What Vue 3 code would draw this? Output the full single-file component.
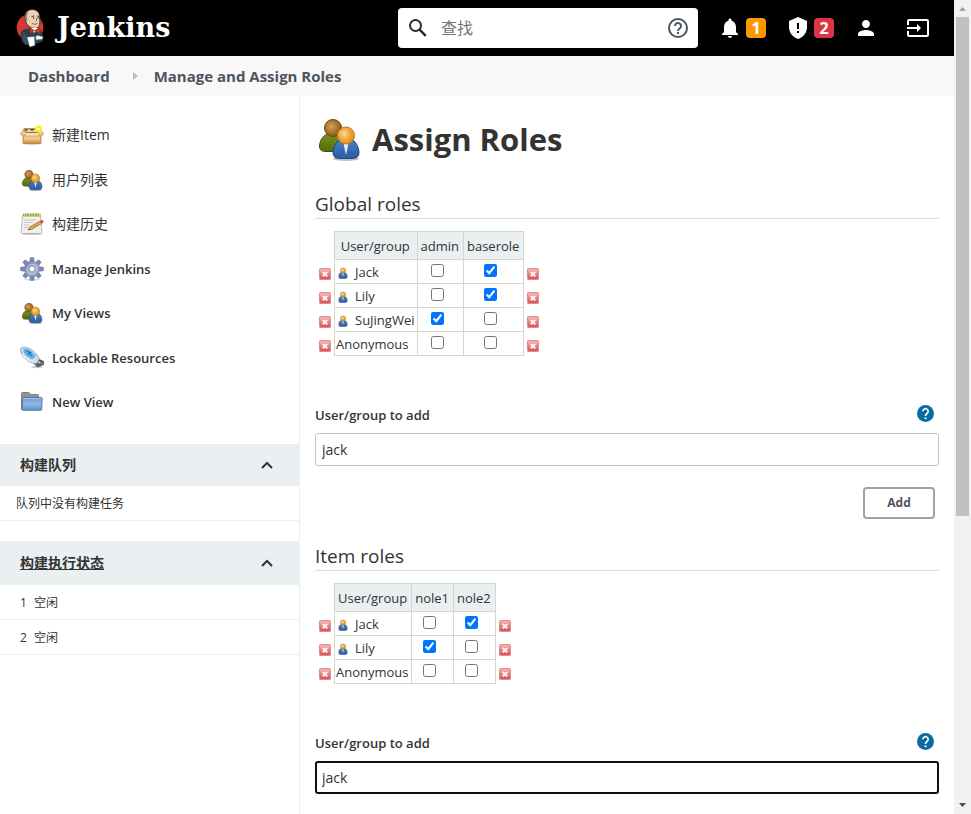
<script setup>
import { ref, reactive } from 'vue'

const tasks = [
  { label: '新建Item', icon: 'package' },
  { label: '用户列表', icon: 'people' },
  { label: '构建历史', icon: 'notepad' },
  { label: 'Manage Jenkins', icon: 'gear', latin: true },
  { label: 'My Views', icon: 'people', latin: true },
  { label: 'Lockable Resources', icon: 'usb', latin: true },
  { label: 'New View', icon: 'folder', latin: true }
]

const executors = [
  { id: 1, status: '空闲' },
  { id: 2, status: '空闲' }
]

const sections = reactive([
  {
    id: 'global',
    title: 'Global roles',
    roles: ['admin', 'baserole'],
    rows: [
      { name: 'Jack', known: true, granted: [false, true] },
      { name: 'Lily', known: true, granted: [false, true] },
      { name: 'SuJingWei', known: true, granted: [true, false] },
      { name: 'Anonymous', known: false, granted: [false, false] }
    ],
    entry: 'jack',
    active: false,
    showAdd: true
  },
  {
    id: 'item',
    title: 'Item roles',
    roles: ['nole1', 'nole2'],
    rows: [
      { name: 'Jack', known: true, granted: [false, true] },
      { name: 'Lily', known: true, granted: [true, false] },
      { name: 'Anonymous', known: false, granted: [false, false] }
    ],
    entry: 'jack',
    active: true,
    showAdd: false
  }
])

const query = ref('')

function addRow(section) {
  const name = section.entry.trim()
  if (name) section.rows.push({ name, known: true, granted: section.roles.map(() => false) })
}

function removeRow(section, index) {
  section.rows.splice(index, 1)
}
</script>

<template>
  <svg class="sprite" aria-hidden="true">
    <defs>
      <radialGradient id="gold" cx=".4" cy=".4" r=".65">
        <stop offset="0" stop-color="#fbdc9c" /><stop offset=".5" stop-color="#efab3c" /><stop offset="1" stop-color="#d68c1c" />
      </radialGradient>
      <radialGradient id="bronze" cx=".4" cy=".4" r=".65">
        <stop offset="0" stop-color="#d3a45e" /><stop offset=".5" stop-color="#ab7830" /><stop offset="1" stop-color="#855618" />
      </radialGradient>
      <linearGradient id="blue" x1="0" y1="0" x2="0" y2="1">
        <stop offset="0" stop-color="#4a7fc2" /><stop offset="1" stop-color="#2a5ba3" />
      </linearGradient>
      <linearGradient id="green" x1="0" y1="0" x2="0" y2="1">
        <stop offset="0" stop-color="#7c8f1c" /><stop offset="1" stop-color="#526c0c" />
      </linearGradient>
      <linearGradient id="carton" x1="0" y1="0" x2="0" y2="1">
        <stop offset="0" stop-color="#d69a4c" /><stop offset=".5" stop-color="#f2cd92" /><stop offset="1" stop-color="#c98c40" />
      </linearGradient>
      <linearGradient id="steel" x1="0" y1="0" x2="1" y2="1">
        <stop offset="0" stop-color="#6678a0" /><stop offset=".5" stop-color="#a7b1d2" /><stop offset="1" stop-color="#9a9fc6" />
      </linearGradient>
      <linearGradient id="sky" x1="0" y1="0" x2="0" y2="1">
        <stop offset="0" stop-color="#6f9fd4" /><stop offset=".5" stop-color="#8db6e2" /><stop offset="1" stop-color="#5f92cc" />
      </linearGradient>
      <linearGradient id="danger" x1="0" y1="0" x2="0" y2="1">
        <stop offset="0" stop-color="#f2bcbc" /><stop offset="1" stop-color="#dc4a4e" />
      </linearGradient>
    </defs>

    <symbol id="people" viewBox="0 0 48 48">
      <ellipse cx="31" cy="43.500" rx="13" ry="2.500" fill="#000" opacity=".25" />
      <path d="M4.500 31C5 24 9 20 13 19h10c4 1 8 5 8.500 12 .2 4-3 5.500-7 5.500H11c-4 0-6.700-1.500-6.500-5.500z" fill="url(#green)" stroke="#3e5206" />
      <circle cx="18" cy="13" r="8.500" fill="url(#bronze)" stroke="#6b430d" />
      <path d="M18 37.500c.5-7 4-12 8-13h10c4 1 7.500 6 8 13 .2 4-3 6-7 6H25c-4 0-7.200-2-7-6z" fill="url(#blue)" stroke="#1d4685" />
      <path d="M28 26l3 14 3-14z" fill="#e8eff8" />
      <circle cx="31" cy="20.500" r="8.500" fill="url(#gold)" stroke="#c27d18" />
    </symbol>

    <symbol id="person" viewBox="0 0 12 12">
      <path d="M1.800 9.500C1.800 7 3 5.500 4.500 5.500h3C9 5.500 10.200 7 10.200 9.500c0 1.500-1 2-2 2H3.800c-1 0-2-.5-2-2z" fill="url(#blue)" stroke="#1d4685" stroke-width=".5" />
      <path d="M5.200 6.500l.8 3.500.8-3.500z" fill="#dce8f6" />
      <circle cx="6" cy="3.500" r="2.600" fill="url(#gold)" stroke="#b97b20" stroke-width=".5" />
    </symbol>

    <symbol id="package" viewBox="0 0 24 24">
      <ellipse cx="12" cy="20.500" rx="10" ry="1.500" fill="#000" opacity=".18" />
      <path d="M4 5.500h15l3 4.500H1.500z" fill="#b5813f" stroke="#a8702c" stroke-width=".6" />
      <path d="M6 6h11l1 3.500H5z" fill="#6b5233" />
      <path d="M6 8l3-2 3 2 3-2 2 3H6z" fill="#d8d5ce" />
      <path d="M3 10h18v9.500q0 1-1 1H4q-1 0-1-1z" fill="url(#carton)" stroke="#b67c34" stroke-width=".8" />
      <path d="M.8 10l3-3.500L6 9.800l-1.500 3.400L.8 12zM23.200 10l-3-3.500L18 9.800l1.500 3.400 3.700-1.200z" fill="#eec68a" stroke="#bd8641" stroke-width=".5" />
      <path d="M5 10h14l-1 2.500H6z" fill="#f8dfb5" />
      <circle cx="18.500" cy="6" r="3.600" fill="#f8ef27" />
      <circle cx="18.500" cy="6" r="1.600" fill="#fffcc0" />
    </symbol>

    <symbol id="notepad" viewBox="0 0 24 24">
      <ellipse cx="12" cy="22" rx="10" ry="1.200" fill="#000" opacity=".2" />
      <path d="M2.500 3.500h18L22 20.500q0 1-1 1H2q-1 0-1-1z" fill="#f1f1ef" stroke="#a9aba6" stroke-width=".8" />
      <path d="M3 1.500h17.500v3H3z" fill="#a3a238" />
      <path d="M4.500 1v3M7 1v3M9.500 1v3M12 1v3M14.500 1v3M17 1v3M19.500 1v3" stroke="#e1dfa5" stroke-width=".8" />
      <path d="M4 8h12M4 10.500h9M4 13h5M4 15.500h4" stroke="#b9bcb8" stroke-width=".8" />
      <path d="M8 18l2-3.200L20 9l1.700 2.600-10.200 5.900z" fill="#d6a04d" stroke="#8d622b" stroke-width=".6" />
      <path d="M20 9l2-1q1.800 0 1.500 2.200l-1.800 1.400z" fill="#dd4138" />
      <path d="M8 18l.8-1.300 1 1z" fill="#333" />
    </symbol>

    <symbol id="gear" viewBox="0 0 24 24">
      <ellipse cx="12" cy="22.500" rx="8" ry="1.200" fill="#000" opacity=".15" />
      <g fill="#7c8ab2" stroke="#66739a" stroke-width=".5">
        <path v-for="angle in [0, 45, 90, 135, 180, 225, 270, 315]" :key="angle" :transform="`rotate(${angle} 12 12)`" d="M9.500 6L10.300.6h3.400L14.500 6z" />
      </g>
      <circle cx="12" cy="12" r="7.500" fill="url(#steel)" stroke="#717ea5" stroke-width=".5" />
      <circle cx="12" cy="12" r="4.600" fill="none" stroke="#c3cbe2" stroke-width="1" />
      <circle cx="12" cy="12" r="3" fill="#fff" stroke="#7581a6" stroke-width=".8" />
    </symbol>

    <symbol id="usb" viewBox="0 0 24 24">
      <ellipse cx="17" cy="21" rx="6" ry="1.200" fill="#000" opacity=".2" />
      <path d="M14 17.500l5.500-4 4.300 2v3L17.500 21z" fill="#5e5f61" stroke="#3e3e40" stroke-width=".6" />
      <path d="M18 16.500l1.500-.9 1 .8-1.500 1zM20.600 17.500l1.200-.8.7.600-1.200.8z" fill="#e5e5e5" />
      <path d="M.5 4Q.5 1 4.500 1.200q4 .3 8.500 3.300l5.500 6q1.300 2.500-.3 5-1.700 2.700-4.200 2.200Q7 15.500 3 10.500.5 6.500.5 4z" fill="#d6dbe3" stroke="#8d96a4" stroke-width=".8" />
      <path d="M3.500 3q4-.8 7.500 2.200l5 4.500-4 3.600Q5.500 10 3.500 6z" fill="#4fb5ee" />
      <path d="M6.500 4.500l5 5M8 8.500l3.500-2.500M9 5v2l3 3" stroke="#155e9c" stroke-width=".9" fill="none" />
      <path d="M2.500 8.500q5 6.500 11 7.500" stroke="#fff" stroke-width="1.200" fill="none" />
    </symbol>

    <symbol id="folder" viewBox="0 0 24 24">
      <path d="M1.500 19.500V3.500q0-1 1-1h6q1 0 1.200 1l.3 1h7.500q1 0 1 1v14z" fill="#92948f" stroke="#70726e" stroke-width=".8" />
      <path d="M3.500 7.500h18q.8 0 .7 1l-.5 11q0 .8-1 .8H3q-.9 0-.8-.8l.5-11.200q0-.8.8-.8z" fill="url(#sky)" stroke="#3d6ca7" stroke-width=".8" />
      <path d="M3.500 8.500h18" stroke="#b4d0ee" stroke-width=".8" />
    </symbol>

    <symbol id="remove" viewBox="0 0 12 12">
      <rect x=".5" y=".5" width="11" height="11" rx=".8" fill="url(#danger)" stroke="#e38a8c" />
      <path d="M3.800 4l4.400 4.400M8.200 4L3.800 8.400" stroke="#fff" stroke-width="1.800" />
    </symbol>
  </svg>

  <div class="window">
    <div class="page">
      <header class="topbar">
        <a class="brand" href="#">
          <svg class="butler" viewBox="0 0 30 40" aria-hidden="true">
            <circle cx="14" cy="19.500" r="13.300" fill="#d33833" />
            <path d="M5 25q1-4 7-4.500l8 .5q6 1 6.500 5l.5 7-7 3-11 1Q4 31 5 25z" fill="#2c4254" />
            <path d="M8 23l-3 3q0 7 4 10.500l4 .5-1-10z" fill="#335061" stroke="#16222c" stroke-width=".6" />
            <path d="M9.500 6Q11 1.500 16.500 1.500q6 .5 7 5.500l.4 7q.1 6-4.900 6.500-4 .5-8-4L9.500 13q-1.500-3 0-7z" fill="#efd0ae" stroke="#2a211c" stroke-width=".8" />
            <path d="M9.200 6.500q1-3 3-3.500l-1.500 5 .8 5-2-1z" fill="#7d7469" />
            <path d="M15.500 8.500l3-.5M21 8l2.300.5" stroke="#40352e" stroke-width=".9" />
            <circle cx="17.500" cy="10" r=".7" fill="#211a16" /><circle cx="22" cy="10" r=".7" fill="#211a16" />
            <path d="M20 10q1.500 3 0 3.300M16 15.500q3 1.700 5.500 0" fill="none" stroke="#6b4a37" stroke-width=".8" />
            <path d="M15 20l3 5 4-5z" fill="#fff" />
            <path d="M14 20l4.500 2.500L14 26zM24 20l-5.500 2.500L24 26z" fill="#d33833" stroke="#7a1a17" stroke-width=".5" />
            <path d="M11 29l7.500-.5.5 9-5.500 1.500z" fill="#fff" stroke="#46545e" stroke-width=".5" />
            <path d="M19.500 28.500q2.500-2 4.500-.5l3 .5q.5 2.500-2 3l-5 .5z" fill="#fff" stroke="#46545e" stroke-width=".6" />
          </svg>
          <span>Jenkins</span>
        </a>
        <form class="search" role="search" @submit.prevent>
          <svg viewBox="0 0 24 24" aria-hidden="true"><circle cx="9.500" cy="9.500" r="5.500" fill="none" stroke="#2c2c2c" stroke-width="2" /><path d="M13.600 13.600l6.200 6.200" stroke="#2c2c2c" stroke-width="2.400" /></svg>
          <input v-model="query" type="search" placeholder="查找" aria-label="查找" />
          <a href="#" aria-label="Help">
            <svg viewBox="0 0 24 24" aria-hidden="true"><circle cx="12" cy="12" r="9" fill="none" stroke="#4d545d" stroke-width="2" /><path d="M9 10a3 3 0 1 1 4.600 2.500C12.400 13.300 12 13.900 12 15" fill="none" stroke="#4d545d" stroke-width="2" /><path d="M11 16h2v2h-2z" fill="#4d545d" /></svg>
          </a>
        </form>
        <nav class="actions" aria-label="Account">
          <a href="#" aria-label="Notifications">
            <svg viewBox="0 0 24 24" aria-hidden="true"><path fill="#fff" d="M12 22c1.100 0 2-.9 2-2h-4c0 1.100.9 2 2 2zm6-6v-5c0-3.070-1.640-5.640-4.500-6.320V4c0-.83-.67-1.500-1.500-1.500s-1.500.67-1.500 1.500v.68C7.630 5.360 6 7.920 6 11v5l-2 2v1h16v-1l-2-2z" /></svg>
            <span class="count warn">1</span>
          </a>
          <a href="#" aria-label="Security warnings">
            <svg viewBox="0 0 24 24" aria-hidden="true"><path fill="#fff" d="M12 1L3 5v6c0 5.550 3.840 10.740 9 12 5.160-1.260 9-6.450 9-12V5z" /><path fill="#000" d="M11 7h2v6h-2zM11 15h2v2h-2z" /></svg>
            <span class="count alert">2</span>
          </a>
          <a href="#" aria-label="User">
            <svg viewBox="0 0 24 24" aria-hidden="true"><path fill="#fff" d="M12 12c2.210 0 4-1.790 4-4s-1.790-4-4-4-4 1.790-4 4 1.790 4 4 4zm0 2c-2.670 0-8 1.340-8 4v2h16v-2c0-2.660-5.330-4-8-4z" /></svg>
          </a>
          <a class="logout" href="#" aria-label="Log out">
            <svg viewBox="0 0 24 24" aria-hidden="true"><path d="M2 9V5q0-1 1-1h18q1 0 1 1v14q0 1-1 1H3q-1 0-1-1v-4" fill="none" stroke="#fff" stroke-width="2" /><path d="M1 11h10V8l4 4-4 4v-3H1z" fill="#fff" /></svg>
          </a>
        </nav>
      </header>

      <nav class="crumbs" aria-label="Breadcrumb">
        <a href="#">Dashboard</a>
        <svg viewBox="0 0 5 8" aria-hidden="true"><path d="M0 0l5 4-5 4z" fill="#b9bcbf" /></svg>
        <a href="#">Manage and Assign Roles</a>
      </nav>

      <div class="body">
        <aside class="side">
          <ul class="tasks">
            <li v-for="task in tasks" :key="task.label" :class="{ latin: task.latin }">
              <a href="#"><svg aria-hidden="true"><use :href="`#${task.icon}`" /></svg>{{ task.label }}</a>
            </li>
          </ul>

          <section class="pane">
            <h2>构建队列
              <button type="button" aria-label="Collapse build queue"><svg viewBox="0 0 12 8" aria-hidden="true"><path d="M1 7l5-5 5 5" /></svg></button>
            </h2>
            <p class="row empty">队列中没有构建任务</p>
          </section>

          <section class="pane executors">
            <h2><a href="#">构建执行状态</a>
              <button type="button" aria-label="Collapse executors"><svg viewBox="0 0 12 8" aria-hidden="true"><path d="M1 7l5-5 5 5" /></svg></button>
            </h2>
            <p v-for="item in executors" :key="item.id" class="row"><span>{{ item.id }}</span>{{ item.status }}</p>
          </section>
        </aside>

        <main class="main">
          <h1><svg aria-hidden="true"><use href="#people" /></svg>Assign Roles</h1>

          <section v-for="section in sections" :key="section.id" class="roles">
            <h2>{{ section.title }}</h2>
            <table>
              <thead>
                <tr>
                  <td class="tool"></td>
                  <th scope="col">User/group</th>
                  <th v-for="role in section.roles" :key="role" scope="col">{{ role }}</th>
                  <td class="tool"></td>
                </tr>
              </thead>
              <tbody>
                <tr v-for="(row, index) in section.rows" :key="row.name">
                  <td class="tool">
                    <button type="button" :aria-label="`Remove ${row.name}`" @click="removeRow(section, index)"><svg aria-hidden="true"><use href="#remove" /></svg></button>
                  </td>
                  <td class="name">
                    <span><svg v-if="row.known" aria-hidden="true"><use href="#person" /></svg>{{ row.name }}</span>
                  </td>
                  <td v-for="(role, column) in section.roles" :key="role" class="grant">
                    <input v-model="row.granted[column]" type="checkbox" :aria-label="`${row.name}: ${role}`" />
                  </td>
                  <td class="tool">
                    <button type="button" :aria-label="`Remove ${row.name}`" @click="removeRow(section, index)"><svg aria-hidden="true"><use href="#remove" /></svg></button>
                  </td>
                </tr>
              </tbody>
            </table>

            <div class="field-head">
              <label :for="`${section.id}-entry`">User/group to add</label>
              <a href="#" aria-label="Help for User/group to add">
                <svg viewBox="0 0 24 24" aria-hidden="true"><circle cx="12" cy="12" r="12" fill="#0b6aa2" /><path d="M8.300 9a3.700 3.700 0 1 1 5.800 3C12.500 13.100 12 13.800 12 15.500" fill="none" stroke="#fff" stroke-width="2.400" /><path d="M10.700 17.500h2.600V20h-2.600z" fill="#fff" /></svg>
              </a>
            </div>
            <input :id="`${section.id}-entry`" v-model="section.entry" class="entry" :class="{ active: section.active }" type="text" />
            <div v-if="section.showAdd" class="submit">
              <button type="button" @click="addRow(section)">Add</button>
            </div>
          </section>
        </main>
      </div>
    </div>

    <div class="scroller" aria-hidden="true">
      <svg viewBox="0 0 17 17"><path d="M5 11l3.500-4 3.500 4z" fill="#a3a3a3" /></svg>
      <div class="track"><div class="thumb"></div></div>
      <svg viewBox="0 0 17 17"><path d="M5 6l3.500 4L12 6z" fill="#505050" /></svg>
    </div>
  </div>
</template>

<style>
body {
  background: #fff;
}
</style>

<style scoped>
.sprite {
  position: absolute;
  width: 0;
  height: 0;
}

.window {
  display: flex;
  height: 100vh;
  overflow: hidden;
  font: 14px/20px "Open Sans", "Noto Sans CJK SC", sans-serif;
  color: #333;
}

.window svg {
  display: block;
  flex: none;
}

a {
  color: inherit;
  text-decoration: none;
}

button {
  font: inherit;
  color: inherit;
  background: none;
  border: 0;
  padding: 0;
  cursor: pointer;
}

.page {
  flex: 1;
  min-width: 0;
  display: flex;
  flex-direction: column;
}

.topbar {
  display: flex;
  align-items: center;
  height: 56px;
  flex: none;
  padding: 0 24px 0 16px;
  background: #000;
  color: #fff;
}

.brand {
  display: flex;
  align-items: center;
  gap: 11px;
  margin-right: auto;
  font: bold 27px/40px "DejaVu Serif", serif;
}

.butler {
  width: 30px;
  height: 40px;
}

.search {
  display: flex;
  align-items: center;
  box-sizing: border-box;
  width: 300px;
  height: 40px;
  padding: 0 8px;
  border-radius: 4px;
  background: #fff;
}

.search svg,
.actions svg {
  width: 24px;
  height: 24px;
}

.search input {
  flex: 1;
  min-width: 0;
  margin: 0 8px 0 11px;
  padding: 0;
  border: 0;
  outline: 0;
  background: none;
  font: 16px/24px "Open Sans", "Noto Sans CJK SC", sans-serif;
}

.search input::placeholder {
  color: #757575;
}

.actions {
  display: flex;
  gap: 20px;
  margin-left: 20px;
}

.actions a {
  display: flex;
  align-items: center;
  gap: 4px;
}

.actions .logout {
  margin-left: 8px;
}

.count {
  width: 20px;
  border-radius: 4px;
  text-align: center;
  font-size: 16px;
  font-weight: 700;
}

.warn {
  background: #ff9800;
}

.alert {
  background: #dc3545;
}

.crumbs {
  display: flex;
  align-items: center;
  height: 40px;
  flex: none;
  padding: 0 28px;
  background: #f8f8f8;
  color: #4d545d;
  font-size: 15px;
  font-weight: 700;
}

.crumbs svg {
  width: 5px;
  height: 8px;
  margin: 0 16px 0 23px;
}

.body {
  flex: 1;
  display: flex;
  min-height: 0;
}

.side {
  box-sizing: border-box;
  width: 300px;
  flex: none;
  border-right: 1px solid #eaeff2;
}

.tasks {
  display: grid;
  align-content: space-between;
  min-height: 291px;
  margin: 0;
  padding: 27px 20px 30px;
  list-style: none;
}

.latin {
  font-size: 13px;
  font-weight: 600;
}

.tasks a {
  display: flex;
  align-items: center;
  gap: 8px;
}

.tasks svg {
  width: 24px;
  height: 24px;
}

.pane {
  margin-bottom: 20px;
}

.pane h2 {
  display: flex;
  align-items: center;
  justify-content: space-between;
  box-sizing: border-box;
  height: 42px;
  margin: 0;
  padding: 0 26px 1px 20px;
  background: #eaeff2;
  font-size: 14px;
  font-weight: 700;
}

.executors h2 {
  height: 44px;
}

.pane h2 a {
  text-decoration: underline;
}

.pane h2 svg {
  width: 12px;
  height: 8px;
  fill: none;
  stroke: #333;
  stroke-width: 2;
}

.row {
  margin: 0;
  padding: 8px 20px 6px;
  border-bottom: 1px solid #eaeff2;
  font-size: 12px;
}

.empty {
  padding-left: 16px;
}

.row span {
  display: inline-block;
  width: 14px;
}

.main {
  flex: 1;
  min-width: 0;
  padding: 18px 15px;
}

h1 {
  display: flex;
  align-items: center;
  gap: 9px;
  margin: 0 0 26px;
  font-size: 31px;
  line-height: 50px;
  font-weight: 700;
}

h1 svg {
  width: 48px;
  height: 48px;
}

.roles h2 {
  margin: 0 0 12px;
  border-bottom: 1px solid #ddd;
  font-size: 19px;
  line-height: 28px;
  font-weight: 500;
}

table {
  border-collapse: collapse;
  font-size: 13px;
}

th,
td {
  padding: 0;
}

th,
.name,
.grant {
  border: 1px solid #d3d7cf;
}

th {
  height: 27px;
  padding: 0 4px 0 3px;
  background: #eaeff2;
  font-weight: 400;
}

tbody td {
  height: 23px;
}

.name {
  padding: 0 2px 0 1px;
}

.name span {
  display: flex;
  align-items: center;
  height: 23px;
}

.name svg {
  width: 12px;
  height: 12px;
  margin: 2px 6px 0 1px;
}

.grant {
  padding-right: 6px;
  text-align: center;
}

.grant input {
  display: block;
  width: 13px;
  height: 13px;
  margin: 0 auto 2px;
}

.tool {
  width: 12px;
  padding: 0 3px 0 4px;
}

.tool:last-child {
  padding-left: 3px;
}

.tool button {
  display: block;
}

.tool svg {
  width: 12px;
  height: 12px;
  margin-top: 5px;
}

.field-head {
  display: flex;
  align-items: flex-start;
  justify-content: space-between;
  margin: 49px 5px 8px 0;
}

.field-head label {
  font-size: 13px;
  font-weight: 600;
}

.field-head svg {
  width: 17px;
  height: 17px;
}

.entry {
  display: block;
  box-sizing: border-box;
  width: 100%;
  height: 33px;
  padding: 0 6px;
  border: 1px solid #c4c4c4;
  border-radius: 3px;
  outline: 0;
  color: #333;
  font: 14px/20px "Open Sans", "Noto Sans CJK SC", sans-serif;
}

.active {
  padding: 0 5px;
  border: 2px solid #101010;
}

.submit {
  display: flex;
  justify-content: flex-end;
  margin: 21px 4px 23px 0;
}

.submit button {
  box-sizing: border-box;
  width: 72px;
  height: 32px;
  border: 2px solid #98a4ad;
  border-radius: 4px;
  color: #4d545d;
  font-size: 12px;
  font-weight: 700;
}

.scroller {
  display: flex;
  flex-direction: column;
  width: 17px;
  background: #f1f1f1;
}

.scroller svg {
  width: 17px;
  height: 17px;
}

.track {
  flex: 1;
  padding: 0 2px;
}

.thumb {
  height: 64%;
  background: #c1c1c1;
}
</style>
